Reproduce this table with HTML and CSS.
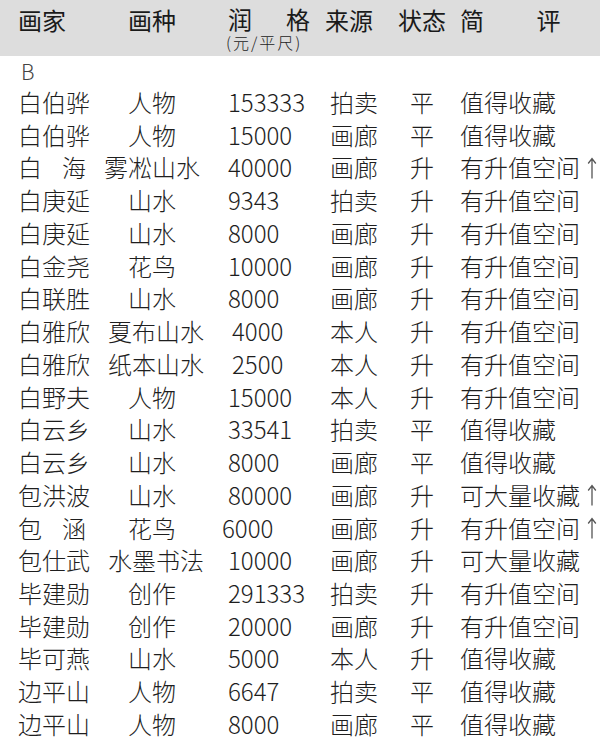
FILE: index.html
```html
<!DOCTYPE html>
<html lang="zh-CN">
<head>
<meta charset="utf-8">
<title>画家润格</title>
<link rel="stylesheet" href="styles.css">
</head>
<body>
<div class="sheet">
  <div class="head">
    <div class="h-name">画家</div>
    <div class="h-type">画种</div>
    <div class="h-price"><div class="h-price-main">润　格</div><div class="h-unit">(元/平尺)</div></div>
    <div class="h-src">来源</div>
    <div class="h-state">状态</div>
    <div class="h-note">简　　评</div>
  </div>
  <div class="letter">B</div>
  <div class="rows">
    <div class="row"><span class="c-name">白伯骅</span><span class="c-type">人物</span><span class="c-price">153333</span><span class="c-src">拍卖</span><span class="c-state">平</span><span class="c-note">值得收藏</span></div>
    <div class="row"><span class="c-name">白伯骅</span><span class="c-type">人物</span><span class="c-price">15000</span><span class="c-src">画廊</span><span class="c-state">平</span><span class="c-note">值得收藏</span></div>
    <div class="row"><span class="c-name two">白　海</span><span class="c-type">雾凇山水</span><span class="c-price">40000</span><span class="c-src">画廊</span><span class="c-state">升</span><span class="c-note">有升值空间<svg class="up" viewBox="0 0 10 22" width="10" height="22"><path d="M5 1.5V21.5M1.2 6.5L5 1.5L8.8 6.5" fill="none" stroke="#555" stroke-width="1.3"/></svg></span></div>
    <div class="row"><span class="c-name">白庚延</span><span class="c-type">山水</span><span class="c-price">9343</span><span class="c-src">拍卖</span><span class="c-state">升</span><span class="c-note">有升值空间</span></div>
    <div class="row"><span class="c-name">白庚延</span><span class="c-type">山水</span><span class="c-price">8000</span><span class="c-src">画廊</span><span class="c-state">升</span><span class="c-note">有升值空间</span></div>
    <div class="row"><span class="c-name">白金尧</span><span class="c-type">花鸟</span><span class="c-price">10000</span><span class="c-src">画廊</span><span class="c-state">升</span><span class="c-note">有升值空间</span></div>
    <div class="row"><span class="c-name">白联胜</span><span class="c-type">山水</span><span class="c-price">8000</span><span class="c-src">画廊</span><span class="c-state">升</span><span class="c-note">有升值空间</span></div>
    <div class="row"><span class="c-name">白雅欣</span><span class="c-type wide">夏布山水</span><span class="c-price shift-r">4000</span><span class="c-src">本人</span><span class="c-state">升</span><span class="c-note">有升值空间</span></div>
    <div class="row"><span class="c-name">白雅欣</span><span class="c-type wide">纸本山水</span><span class="c-price shift-r">2500</span><span class="c-src">本人</span><span class="c-state">升</span><span class="c-note">有升值空间</span></div>
    <div class="row"><span class="c-name">白野夫</span><span class="c-type">人物</span><span class="c-price">15000</span><span class="c-src">本人</span><span class="c-state">升</span><span class="c-note">有升值空间</span></div>
    <div class="row"><span class="c-name">白云乡</span><span class="c-type">山水</span><span class="c-price">33541</span><span class="c-src">拍卖</span><span class="c-state">平</span><span class="c-note">值得收藏</span></div>
    <div class="row"><span class="c-name">白云乡</span><span class="c-type">山水</span><span class="c-price">8000</span><span class="c-src">画廊</span><span class="c-state">平</span><span class="c-note">值得收藏</span></div>
    <div class="row"><span class="c-name">包洪波</span><span class="c-type">山水</span><span class="c-price">80000</span><span class="c-src">画廊</span><span class="c-state">升</span><span class="c-note">可大量收藏<svg class="up" viewBox="0 0 10 22" width="10" height="22"><path d="M5 1.5V21.5M1.2 6.5L5 1.5L8.8 6.5" fill="none" stroke="#555" stroke-width="1.3"/></svg></span></div>
    <div class="row"><span class="c-name two">包　涵</span><span class="c-type">花鸟</span><span class="c-price shift-l">6000</span><span class="c-src">画廊</span><span class="c-state">升</span><span class="c-note">有升值空间<svg class="up" viewBox="0 0 10 22" width="10" height="22"><path d="M5 1.5V21.5M1.2 6.5L5 1.5L8.8 6.5" fill="none" stroke="#555" stroke-width="1.3"/></svg></span></div>
    <div class="row"><span class="c-name">包仕武</span><span class="c-type wide">水墨书法</span><span class="c-price">10000</span><span class="c-src">画廊</span><span class="c-state">升</span><span class="c-note">可大量收藏</span></div>
    <div class="row"><span class="c-name">毕建勋</span><span class="c-type">创作</span><span class="c-price">291333</span><span class="c-src">拍卖</span><span class="c-state">升</span><span class="c-note">有升值空间</span></div>
    <div class="row"><span class="c-name">毕建勋</span><span class="c-type">创作</span><span class="c-price">20000</span><span class="c-src">画廊</span><span class="c-state">升</span><span class="c-note">有升值空间</span></div>
    <div class="row"><span class="c-name">毕可燕</span><span class="c-type">山水</span><span class="c-price">5000</span><span class="c-src">本人</span><span class="c-state">升</span><span class="c-note">值得收藏</span></div>
    <div class="row"><span class="c-name">边平山</span><span class="c-type">人物</span><span class="c-price">6647</span><span class="c-src">拍卖</span><span class="c-state">平</span><span class="c-note">值得收藏</span></div>
    <div class="row"><span class="c-name">边平山</span><span class="c-type">人物</span><span class="c-price">8000</span><span class="c-src">画廊</span><span class="c-state">平</span><span class="c-note">值得收藏</span></div>
  </div>
</div>
</body>
</html>
```

FILE: styles.css
```css
html, body {
  margin: 0;
  padding: 0;
  background: #ffffff;
}

body {
  width: 600px;
  height: 748px;
  overflow: hidden;
  font-family: "Noto Sans CJK SC", "Noto Sans", sans-serif;
  font-weight: 300;
  color: #1e1e1e;
}

.sheet {
  display: flex;
  flex-direction: column;
}

.head {
  height: 56px;
  background: #dddddd;
  display: grid;
  grid-template-columns: 85px 98px 124px 73px 62px 1fr;
  padding-left: 18px;
  box-sizing: border-box;
  align-items: start;
  padding-top: 5px;
  font-size: 24px;
  line-height: 30px;
  font-weight: 400;
  color: #1a1a1a;
}

.h-type {
  text-align: center;
}

.h-price {
  padding-left: 27px;
  display: flex;
  flex-direction: column;
}

.h-price-main {
  letter-spacing: 5px;
  line-height: 28px;
}

.h-unit {
  font-size: 16px;
  line-height: 18px;
  letter-spacing: 2px;
  margin-left: -2px;
  font-weight: 300;
  color: #222;
  white-space: nowrap;
}

.h-note {
  letter-spacing: 1.5px;
}

.letter {
  height: 30px;
  line-height: 30px;
  padding-left: 21px;
  font-size: 21px;
  color: #444;
  font-weight: 300;
}

.rows {
  display: flex;
  flex-direction: column;
}

.row {
  display: grid;
  grid-template-columns: 85px 98px 129px 80px 50px 1fr;
  padding-left: 18px;
  height: 32.74px;
  line-height: 32.74px;
  font-size: 24px;
  white-space: nowrap;
  align-items: center;
}

.c-name.two {
  letter-spacing: -2px;
}

.c-type {
  text-align: center;
}

.c-type.wide {
  padding-left: 5px;
  margin-right: -10px;
  text-align: left;
}

.c-price {
  padding-left: 27px;
}

.c-price.shift-r {
  padding-left: 31px;
}

.c-price.shift-l {
  padding-left: 21px;
}

.c-note {
  display: flex;
  align-items: center;
  height: 32.74px;
}

.up {
  margin-left: 7px;
  flex: none;
}
```
